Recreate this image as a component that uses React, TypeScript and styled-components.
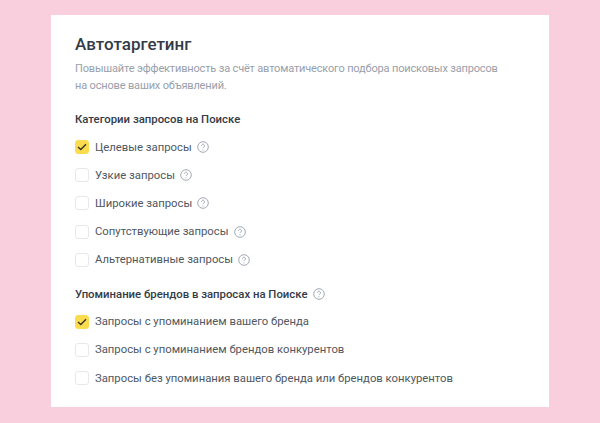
import styled, { createGlobalStyle } from "styled-components";

const GlobalStyle = createGlobalStyle`
  html, body {
    margin: 0;
    padding: 0;
    background: #facfdd;
  }
`;

const Page = styled.div`
  width: 600px;
  height: 423px;
  box-sizing: border-box;
  padding: 15px 51px 0;
  overflow: hidden;
`;

const Card = styled.section`
  height: 392px;
  box-sizing: border-box;
  padding: 19px 24px 0;
  background: #fff;
  font-family: Roboto, "Liberation Sans", sans-serif;
  color: #4f5761;
`;

const Title = styled.h2`
  margin: 0;
  font-size: 17px;
  line-height: 20px;
  font-weight: 500;
  color: #333b46;
`;

const Description = styled.p`
  margin: 6px 0 0;
  font-size: 11px;
  line-height: 17px;
  letter-spacing: -0.16px;
  white-space: nowrap;
  color: #98a0ab;
`;

const SectionTitle = styled.h3<{ $top: number }>`
  display: flex;
  align-items: center;
  margin: ${(p) => p.$top}px 0 0;
  font-size: 11.35px;
  line-height: 16px;
  font-weight: 500;
  color: #333b46;
`;

const List = styled.ul`
  display: flex;
  flex-direction: column;
  gap: 8.2px;
  margin: 10px 0 0;
  padding: 0;
  list-style: none;
`;

const Row = styled.li`
  display: flex;
  align-items: center;
  height: 20px;
  font-size: 11.3px;
`;

const Box = styled.span<{ $checked?: boolean }>`
  display: flex;
  align-items: center;
  justify-content: center;
  flex: none;
  box-sizing: border-box;
  width: 14px;
  height: 14px;
  margin-right: 6px;
  border-radius: 3px;
  border: 1px solid ${(p) => (p.$checked ? "#fbdc4f" : "#e6e8eb")};
  background: ${(p) => (p.$checked ? "#fbdc4f" : "#fff")};
`;

const Hint = styled.svg`
  flex: none;
  width: 12px;
  height: 12px;
  margin-left: 5px;
`;

function HelpIcon() {
  return (
    <Hint viewBox="0 0 12 12" fill="none" stroke="#a3aab6">
      <circle cx="6" cy="6" r="5.3" strokeWidth="1" />
      <path d="M4.5 4.7a1.5 1.5 0 1 1 2.3 1.3c-.5.3-.8.6-.8 1.1" strokeWidth="1" />
      <circle cx="6" cy="8.8" r=".6" fill="#a3aab6" stroke="none" />
    </Hint>
  );
}

function Option({ label, checked, hint }: { label: string; checked?: boolean; hint?: boolean }) {
  return (
    <Row>
      <Box $checked={checked}>
        {checked && (
          <svg width="10" height="8" viewBox="0 0 10 8" fill="none">
            <path d="M1 4l2.8 2.6L9 1.2" stroke="#3a3420" strokeWidth="1.4" />
          </svg>
        )}
      </Box>
      {label}
      {hint && <HelpIcon />}
    </Row>
  );
}

export default function App() {
  return (
    <Page>
      <GlobalStyle />
      <Card>
        <Title>Автотаргетинг</Title>
        <Description>
          Повышайте эффективность за счёт автоматического подбора поисковых запросов
          <br />
          на основе ваших объявлений.
        </Description>
        <SectionTitle $top={17}>Категории запросов на Поиске</SectionTitle>
        <List>
          <Option label="Целевые запросы" checked hint />
          <Option label="Узкие запросы" hint />
          <Option label="Широкие запросы" hint />
          <Option label="Сопутствующие запросы" hint />
          <Option label="Альтернативные запросы" hint />
        </List>
        <SectionTitle $top={16}>
          Упоминание брендов в запросах на Поиске
          <HelpIcon />
        </SectionTitle>
        <List>
          <Option label="Запросы с упоминанием вашего бренда" checked />
          <Option label="Запросы с упоминанием брендов конкурентов" />
          <Option label="Запросы без упоминания вашего бренда или брендов конкурентов" />
        </List>
      </Card>
    </Page>
  );
}
